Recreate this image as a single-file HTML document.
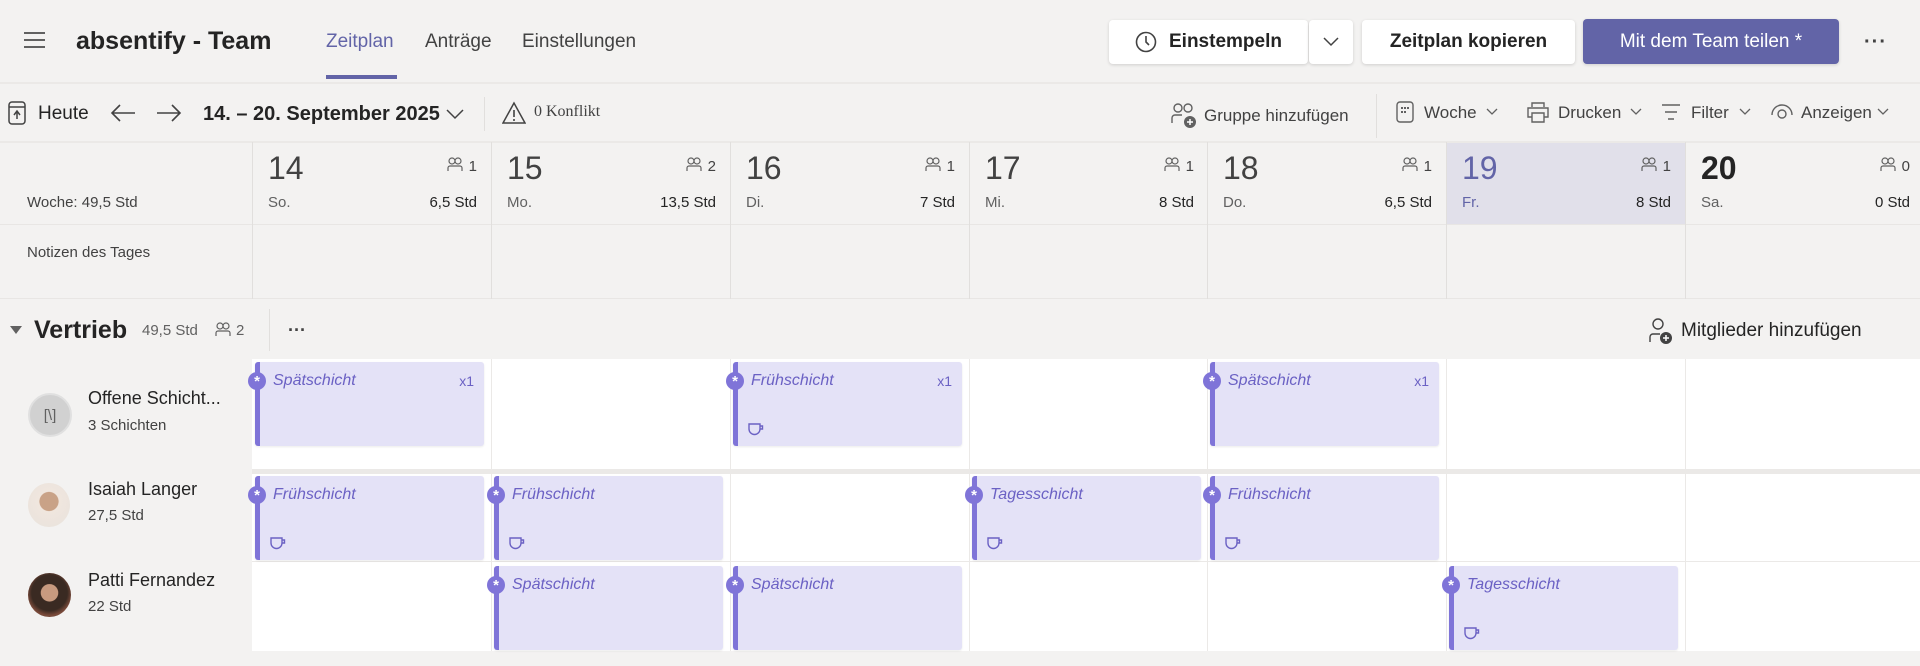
<!DOCTYPE html>
<html><head><meta charset="utf-8"><style>
*{box-sizing:border-box;margin:0;padding:0}
body{width:1920px;height:666px;background:#f3f2f1;font-family:"Liberation Sans",sans-serif;color:#242424;position:relative;overflow:hidden}
.a{position:absolute;white-space:nowrap}
.btn{position:absolute;background:#fff;border-radius:4px;box-shadow:0 1px 3px rgba(0,0,0,.15);font-size:19px;font-weight:bold;display:flex;align-items:center;justify-content:center}
.t{font-size:17px;color:#424242}
.col{position:absolute;top:142px;width:1px;background:#e1dfdd}
.dn{font-size:32px;color:#424242}
.dl{font-size:15px;color:#616161}
.cell{position:absolute;background:#fff}
.card{position:absolute;width:229px;background:#e4e2f7;border-left:5px solid #7f74d8;border-radius:3px;box-shadow:0 1px 2px rgba(0,0,0,.08)}
.card .ti{position:absolute;left:13px;top:10px;font-style:italic;font-size:16px;color:#6b61c4}
.card .x{position:absolute;right:10px;top:11px;font-size:14px;color:#6b61c4}
.card .ast{position:absolute;left:-12px;top:10px;width:18px;height:18px;border-radius:50%;background:#7f74d8;color:#fff;font-size:15px;line-height:20px;text-align:center;font-weight:bold}
.card svg{position:absolute;left:9px;top:60px}
</style></head><body>
<div class="a" style="left:24px;top:32px;width:21px;height:16px;border-top:2px solid #616161;border-bottom:2px solid #616161"><div style="margin-top:5px;border-top:2px solid #616161"></div></div>
<div class="a" style="left:76px;top:27px;font-size:25px;font-weight:bold">absentify - Team</div>
<div class="a" style="left:326px;top:31px;font-size:19px;color:#6264a7">Zeitplan</div>
<div class="a" style="left:326px;top:75px;width:71px;height:4px;background:#6264a7"></div>
<div class="a" style="left:425px;top:31px;font-size:19px;color:#424242">Anträge</div>
<div class="a" style="left:522px;top:31px;font-size:19px;color:#424242">Einstellungen</div>

<div class="btn" style="left:1109px;top:20px;width:199px;height:44px"><svg width="22" height="24" viewBox="0 0 22 24" style="margin-right:12px"><circle cx="11" cy="12" r="9.5" fill="none" stroke="#424242" stroke-width="1.6"/><path d="M11 6v6l3 3" fill="none" stroke="#424242" stroke-width="1.6"/></svg>Einstempeln</div>
<div class="btn" style="left:1309px;top:20px;width:44px;height:44px"><svg width="16" height="10"><path d="M1 1l7 7 7-7" fill="none" stroke="#424242" stroke-width="1.5"/></svg></div>
<div class="btn" style="left:1362px;top:20px;width:213px;height:44px">Zeitplan kopieren</div>
<div class="btn" style="left:1583px;top:19px;width:256px;height:45px;background:#6264a7;color:#fff;font-weight:normal">Mit dem Team teilen *</div>
<div class="a" style="left:1864px;top:31px;font-size:20px;font-weight:bold;color:#424242;letter-spacing:1px">···</div>
<div class="a" style="left:0;top:82px;width:1920px;height:2px;background:#ebe9e7"></div>

<svg class="a" style="left:8px;top:101px" width="18" height="24" viewBox="0 0 18 24"><rect x="1" y="1" width="16" height="22" rx="3" fill="none" stroke="#424242" stroke-width="1.5"/><path d="M1 6h16M9 10v8M6 14l3-4 3 4" fill="none" stroke="#424242" stroke-width="1.5"/></svg>
<div class="a" style="left:38px;top:103px;font-size:19px">Heute</div>
<svg class="a" style="left:110px;top:103px" width="26" height="20"><path d="M25 10H2M10 2L2 10l8 8" fill="none" stroke="#424242" stroke-width="1.6"/></svg>
<svg class="a" style="left:156px;top:103px" width="26" height="20"><path d="M1 10h23M16 2l8 8-8 8" fill="none" stroke="#424242" stroke-width="1.6"/></svg>
<div class="a" style="left:203px;top:103px;font-size:20px;font-weight:bold">14. – 20. September 2025</div>
<svg class="a" style="left:446px;top:108px" width="18" height="12"><path d="M1 2l8 8 8-8" fill="none" stroke="#424242" stroke-width="1.5"/></svg>
<div class="a" style="left:484px;top:97px;width:1px;height:34px;background:#e1dfdd"></div>
<svg class="a" style="left:502px;top:101px" width="24" height="24"><path d="M12 2L1 22h22z" fill="none" stroke="#424242" stroke-width="1.5"/><path d="M12 9v7M12 18v2" stroke="#424242" stroke-width="1.6"/></svg>
<div class="a" style="left:534px;top:103px;font-size:16px;font-family:'Liberation Serif',serif;color:#424242">0 Konflikt</div>

<svg class="a" style="left:1171px;top:103px" width="28" height="28"><circle cx="7" cy="5" r="4" fill="none" stroke="#616161" stroke-width="1.4"/><circle cx="17" cy="5" r="4" fill="none" stroke="#616161" stroke-width="1.4"/><path d="M1 20v-5a3 3 0 013-3h7" fill="none" stroke="#616161" stroke-width="1.4"/><circle cx="19" cy="19" r="6" fill="#616161"/><path d="M19 16v6M16 19h6" stroke="#fff" stroke-width="1.5"/></svg>
<div class="a t" style="left:1204px;top:106px">Gruppe hinzufügen</div>
<div class="a" style="left:1376px;top:94px;width:1px;height:44px;background:#e1dfdd"></div>
<svg class="a" style="left:1396px;top:101px" width="18" height="22"><rect x="1" y="1" width="16" height="20" rx="3" fill="none" stroke="#616161" stroke-width="1.4"/><g fill="#616161"><rect x="5" y="6" width="2" height="2"/><rect x="8" y="6" width="2" height="2"/><rect x="11" y="6" width="2" height="2"/><rect x="5" y="10" width="2" height="2"/><rect x="8" y="10" width="2" height="2"/></g></svg>
<div class="a t" style="left:1424px;top:103px">Woche</div>
<svg class="a" style="left:1486px;top:108px" width="12" height="8"><path d="M1 1l5 5 5-5" fill="none" stroke="#616161" stroke-width="1.3"/></svg>
<svg class="a" style="left:1526px;top:101px" width="24" height="22"><path d="M6 6V2h12v4M6 16H2V7h20v9h-4M6 12h12v9H6z" fill="none" stroke="#616161" stroke-width="1.4"/></svg>
<div class="a t" style="left:1558px;top:103px">Drucken</div>
<svg class="a" style="left:1630px;top:108px" width="12" height="8"><path d="M1 1l5 5 5-5" fill="none" stroke="#616161" stroke-width="1.3"/></svg>
<svg class="a" style="left:1661px;top:103px" width="20" height="18"><path d="M1 2h18M4 9h12M7 16h6" stroke="#616161" stroke-width="1.5"/></svg>
<div class="a t" style="left:1691px;top:103px">Filter</div>
<svg class="a" style="left:1739px;top:108px" width="12" height="8"><path d="M1 1l5 5 5-5" fill="none" stroke="#616161" stroke-width="1.3"/></svg>
<svg class="a" style="left:1770px;top:101px" width="24" height="20"><path d="M2 14a10 10 0 0120 0" fill="none" stroke="#616161" stroke-width="1.4"/><circle cx="12" cy="13" r="4" fill="none" stroke="#616161" stroke-width="1.4"/></svg>
<div class="a t" style="left:1801px;top:103px">Anzeigen</div>
<svg class="a" style="left:1877px;top:108px" width="12" height="8"><path d="M1 1l5 5 5-5" fill="none" stroke="#616161" stroke-width="1.3"/></svg>
<div class="a" style="left:0;top:141px;width:1920px;height:2px;background:#ebe9e7"></div>

<div class="a" style="left:1446px;top:143px;width:239px;height:82px;background:#e1e0ea"></div>
<div class="a" style="left:0;top:224px;width:1920px;height:1px;background:#e8e6e4"></div>
<div class="a" style="left:0;top:298px;width:1920px;height:1px;background:#e8e6e4"></div>
<div class="col" style="left:252px;height:157px"></div><div class="col" style="left:491px;height:157px"></div><div class="col" style="left:730px;height:157px"></div><div class="col" style="left:969px;height:157px"></div><div class="col" style="left:1207px;height:157px"></div><div class="col" style="left:1446px;height:157px"></div><div class="col" style="left:1685px;height:157px"></div>
<div class="a dl" style="left:27px;top:194px;color:#424242">Woche: 49,5 Std</div>
<div class="a dl" style="left:27px;top:244px;color:#424242">Notizen des Tages</div>

<div id="hdr"></div>

<div class="a" style="left:10px;top:326px;width:0;height:0;border-left:6px solid transparent;border-right:6px solid transparent;border-top:8px solid #616161"></div>
<div class="a" style="left:34px;top:316px;font-size:25px;font-weight:bold">Vertrieb</div>
<div class="a" style="left:142px;top:322px;font-size:15px;color:#616161">49,5 Std</div>
<svg class="a" style="left:215px;top:322px" width="16" height="16"><circle cx="5" cy="4" r="3" fill="none" stroke="#616161" stroke-width="1.2"/><circle cx="11" cy="4" r="3" fill="none" stroke="#616161" stroke-width="1.2"/><path d="M1 14v-3a2 2 0 012-2h10a2 2 0 012 2v3" fill="none" stroke="#616161" stroke-width="1.2"/></svg>
<div class="a" style="left:236px;top:322px;font-size:15px;color:#616161">2</div>
<div class="a" style="left:269px;top:309px;width:1px;height:42px;background:#e1dfdd"></div>
<div class="a" style="left:288px;top:320px;font-size:18px;font-weight:bold;color:#424242">···</div>
<svg class="a" style="left:1648px;top:318px" width="26" height="28"><circle cx="10" cy="6" r="5" fill="none" stroke="#424242" stroke-width="1.4"/><path d="M2 24v-5a3 3 0 013-3h7" fill="none" stroke="#424242" stroke-width="1.4"/><circle cx="18" cy="20" r="6" fill="#424242"/><path d="M18 17v6M15 20h6" stroke="#fff" stroke-width="1.5"/></svg>
<div class="a" style="left:1681px;top:320px;font-size:19px">Mitglieder hinzufügen</div>

<div class="cell" style="left:252px;top:359px;width:1668px;height:110px"></div>
<div class="cell" style="left:252px;top:474px;width:1668px;height:177px"></div>
<div class="a" style="left:252px;top:469px;width:1668px;height:5px;background:#ebe9e7"></div>
<div class="a" style="left:252px;top:561px;width:1668px;height:1px;background:#ebe9e7"></div>
<div id="grid"></div>

<div class="a" style="left:28px;top:393px;width:44px;height:44px;border-radius:50%;background:#d1d1d1;border:2px solid #e0e0e0;display:flex;align-items:center;justify-content:center;color:#616161;font-size:15px">[\]</div>
<div class="a" style="left:88px;top:388px;font-size:18px">Offene Schicht...</div>
<div class="a" style="left:88px;top:417px;font-size:15px;color:#424242">3 Schichten</div>
<div class="a" style="left:28px;top:483px;width:42px;height:44px;border-radius:50%;background:radial-gradient(circle at 50% 42%,#c9a287 0 28%,#f0e6de 30%,#e8e2dc 100%)"></div>
<div class="a" style="left:88px;top:479px;font-size:18px">Isaiah Langer</div>
<div class="a" style="left:88px;top:507px;font-size:15px;color:#424242">27,5 Std</div>
<div class="a" style="left:28px;top:573px;width:43px;height:44px;border-radius:50%;background:radial-gradient(circle at 50% 45%,#c89a7f 0 26%,#3a2a22 28% 55%,#7a4a3a 70%,#5a4a40 100%)"></div>
<div class="a" style="left:88px;top:570px;font-size:18px">Patti Fernandez</div>
<div class="a" style="left:88px;top:598px;font-size:15px;color:#424242">22 Std</div>

<script>
var X=[252,491,730,969,1207,1446,1685];
var D=[["14","So.","1","6,5 Std"],["15","Mo.","2","13,5 Std"],["16","Di.","1","7 Std"],["17","Mi.","1","8 Std"],["18","Do.","1","6,5 Std"],["19","Fr.","1","8 Std"],["20","Sa.","0","0 Std"]];
var h="";
var ppl='<svg width="16" height="16" style="vertical-align:-2px;margin-right:6px"><circle cx="5" cy="4" r="3" fill="none" stroke="COL" stroke-width="1.2"/><circle cx="11" cy="4" r="3" fill="none" stroke="COL" stroke-width="1.2"/><path d="M1 14v-3a2 2 0 012-2h10a2 2 0 012 2v3" fill="none" stroke="COL" stroke-width="1.2"/></svg>';
D.forEach(function(d,i){var x=X[i];var c=i==5?"#6264a7":(i==6?"#242424":"#424242");
h+='<div class="a dn" style="left:'+(x+16)+'px;top:150px;color:'+c+';font-weight:'+(i==6?'bold':'normal')+'">'+d[0]+'</div>';
h+='<div class="a dl" style="left:'+(x+16)+'px;top:194px;color:'+(i==5?'#6264a7':'#616161')+'">'+d[1]+'</div>';
h+='<div class="a dl" style="left:'+(x+130)+'px;width:95px;text-align:right;top:157px;color:#424242">'+ppl.replace(/COL/g,"#616161")+d[2]+'</div>';
h+='<div class="a dl" style="left:'+(x+100)+'px;width:125px;text-align:right;top:194px;color:#242424">'+d[3]+'</div>';});
document.getElementById("hdr").outerHTML=h;
var g="";
X.forEach(function(x,i){if(i>0){g+='<div class="a" style="left:'+x+'px;top:359px;width:1px;height:292px;background:#ebe9e7"></div>';}});
var cup='<svg width="18" height="16"><path d="M2 2h11v5a5.5 5.5 0 01-11 0zM13 4h2.5v3H13" fill="none" stroke="#6b61c4" stroke-width="1.4"/></svg>';
var C=[[0,0,"Spätschicht",1,0],[0,2,"Frühschicht",1,1],[0,4,"Spätschicht",1,0],
[1,0,"Frühschicht",0,1],[1,1,"Frühschicht",0,1],[1,3,"Tagesschicht",0,1],[1,4,"Frühschicht",0,1],
[2,1,"Spätschicht",0,0],[2,2,"Spätschicht",0,0],[2,5,"Tagesschicht",0,1]];
var RY=[362,476,566];
C.forEach(function(c){g+='<div class="card" style="left:'+(X[c[1]]+3)+'px;top:'+RY[c[0]]+'px;height:84px"><div class="ast">*</div><div class="ti">'+c[2]+'</div>'+(c[3]?'<div class="x">x1</div>':'')+(c[4]?cup:'')+'</div>';});
document.getElementById("grid").outerHTML=g;
</script>
</body></html>
